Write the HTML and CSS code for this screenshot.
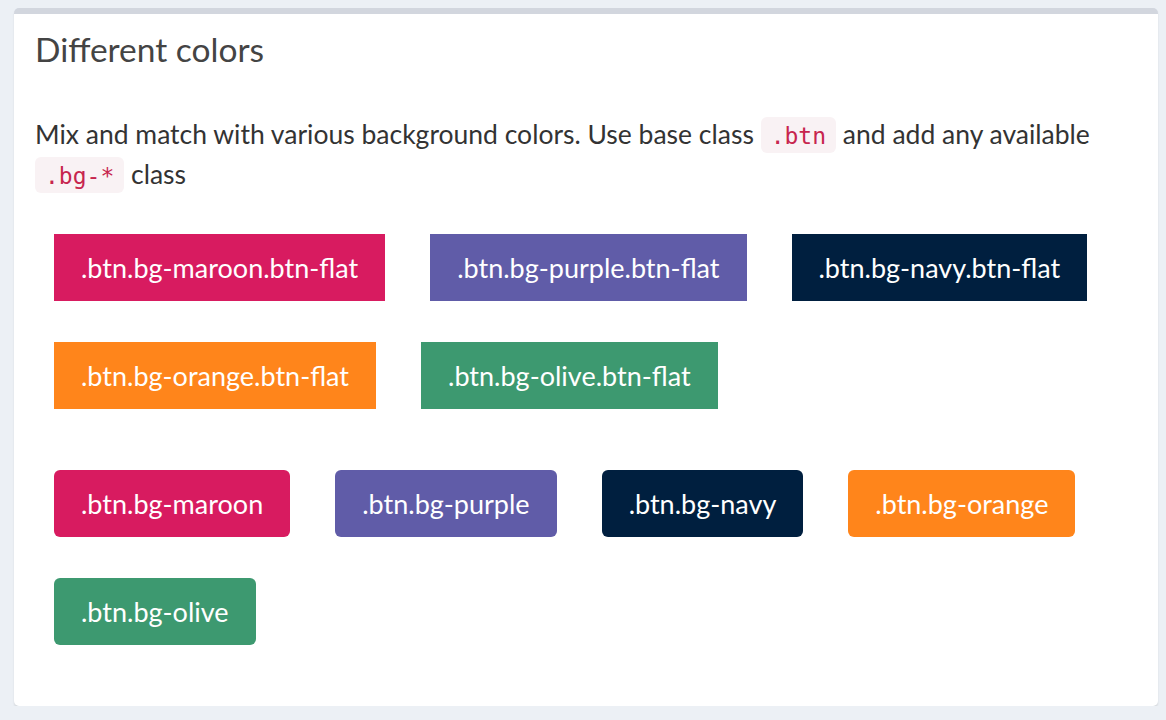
FILE: index.html
```html
<!DOCTYPE html>
<html lang="en">
<head>
<meta charset="utf-8">
<title>Different colors</title>
<link rel="stylesheet" href="styles.css">
</head>
<body>
<div class="box">
  <div class="box-header">
    <h3 class="box-title">Different colors</h3>
  </div>
  <div class="box-body">
    <p class="lead-text">Mix and match with various background colors. Use base class <code>.btn</code> and add any available <code>.bg-*</code> class</p>
    <div class="btn-group">
      <button class="btn bg-maroon">.btn.bg-maroon.btn-flat</button>
      <button class="btn bg-purple">.btn.bg-purple.btn-flat</button>
      <button class="btn bg-navy">.btn.bg-navy.btn-flat</button>
      <button class="btn bg-orange">.btn.bg-orange.btn-flat</button>
      <button class="btn bg-olive">.btn.bg-olive.btn-flat</button>
    </div>
    <div class="btn-group second">
      <button class="btn rounded bg-maroon">.btn.bg-maroon</button>
      <button class="btn rounded bg-purple">.btn.bg-purple</button>
      <button class="btn rounded bg-navy">.btn.bg-navy</button>
      <button class="btn rounded bg-orange">.btn.bg-orange</button>
      <button class="btn rounded bg-olive">.btn.bg-olive</button>
    </div>
  </div>
</div>
</body>
</html>
```

FILE: styles.css
```css
html, body {
  margin: 0;
  padding: 0;
}
body {
  background: #ecf0f5;
  font-family: "Lato", "Liberation Sans", sans-serif;
  color: #333;
  padding: 8px 8px 0 14px;
}
.box {
  width: 1144px;
  height: 698px;
  box-sizing: border-box;
  background: #fff;
  border-top: 6px solid #d2d6de;
  border-radius: 5px;
  box-shadow: 0 2px 2px rgba(0, 0, 0, 0.1);
}
.box-header {
  padding: 17px 20px 0 21px;
}
.box-title {
  margin: 0;
  font-size: 33.5px;
  font-weight: 400;
  line-height: 36px;
  color: #444;
}
.box-body {
  padding: 47px 20px 0 21px;
}
.lead-text {
  margin: 0;
  font-size: 26.5px;
  line-height: 40px;
  color: #333;
}
code {
  font-family: "DejaVu Sans Mono", "Liberation Mono", monospace;
  font-size: 23px;
  line-height: 1;
  color: #c7254e;
  background: #f9f2f4;
  border-radius: 6px;
  padding: 6px 10px 4px;
}
.btn-group {
  display: flex;
  flex-wrap: wrap;
  column-gap: 45px;
  row-gap: 41px;
  padding-left: 19px;
  margin-top: 40px;
}
.btn-group.second {
  margin-top: 61px;
}
.btn {
  border: 0;
  height: 67px;
  padding: 0 27px;
  font-family: "Lato", "Liberation Sans", sans-serif;
  font-size: 27px;
  color: #fff;
  border-radius: 0;
  cursor: pointer;
}
.btn.rounded {
  border-radius: 6px;
}
.bg-maroon { background: #d81b60; }
.bg-purple { background: #605ca8; }
.bg-navy { background: #001f3f; }
.bg-orange { background: #ff851b; }
.bg-olive { background: #3d9970; }
```
